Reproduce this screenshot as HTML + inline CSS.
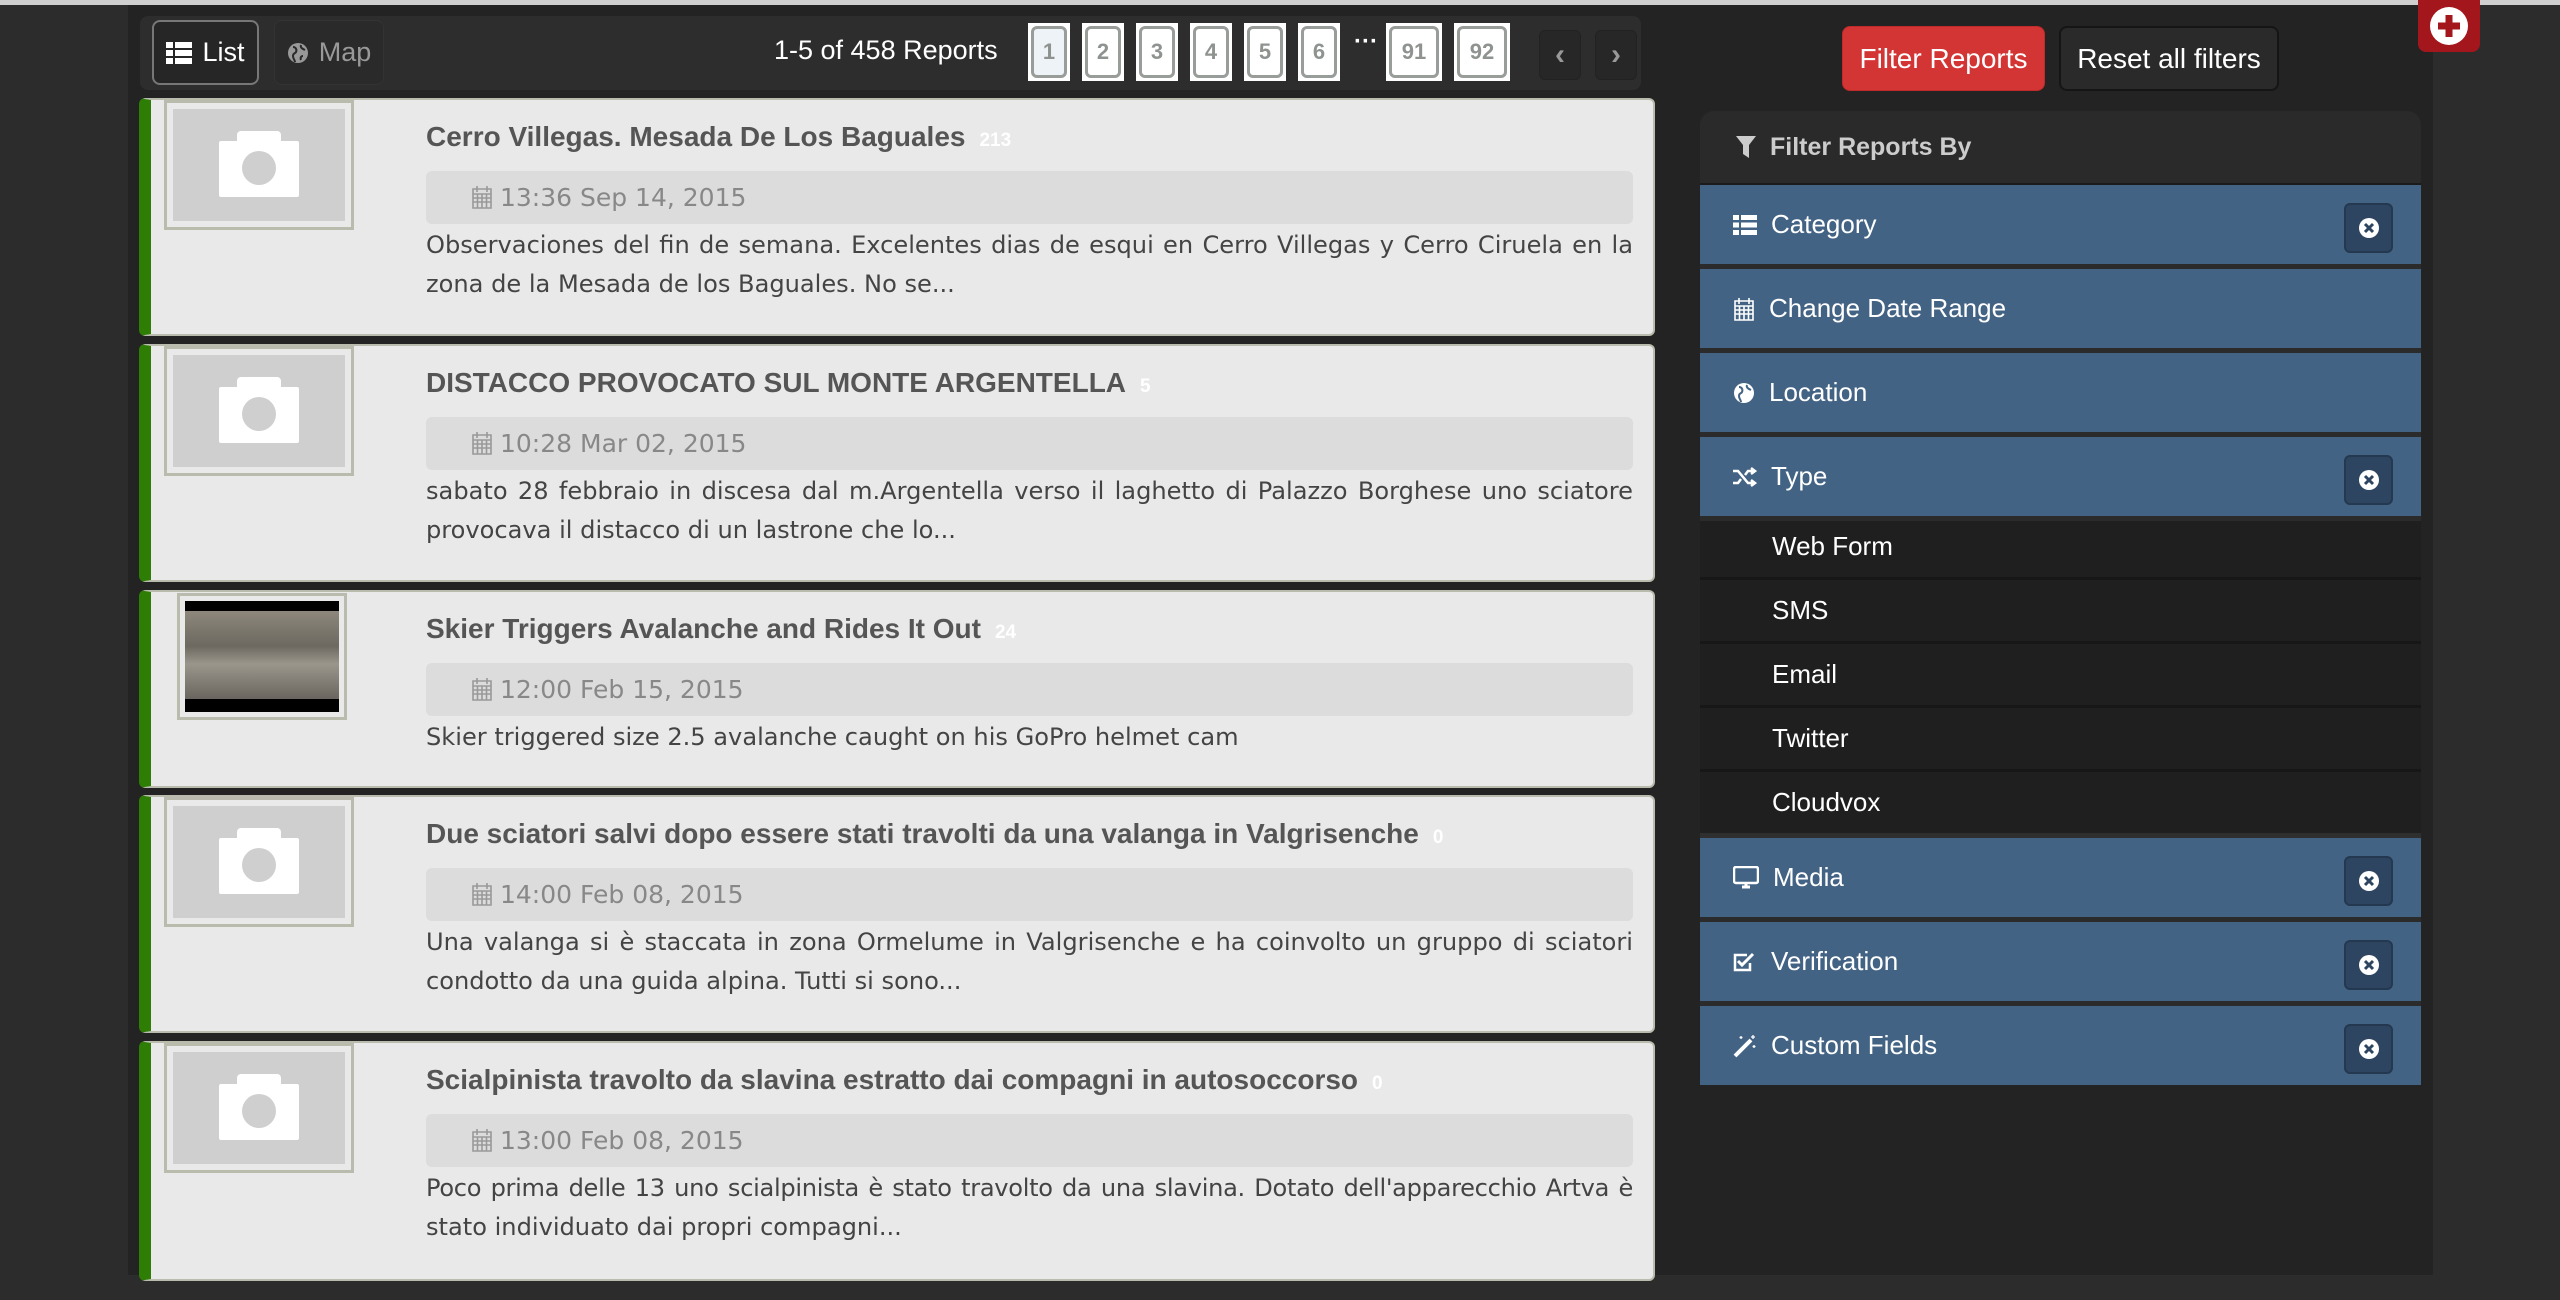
<!DOCTYPE html>
<html><head><meta charset="utf-8">
<style>
*{box-sizing:border-box;margin:0;padding:0}
body{width:2560px;height:1300px;overflow:hidden;background:#2c2c2c;font-family:"Liberation Sans",sans-serif;position:relative}
.abs{position:absolute}
#topline{left:0;top:0;width:2560px;height:5px;background:#cfcfcf}
#col{left:128px;top:5px;width:2305px;height:1270px;background:#232323}
#bar{left:140px;top:16px;width:1501px;height:74px;background:#2d2d2d;border-radius:8px}
.vbtn{top:20px;height:65px;border-radius:8px;font-size:27px;display:flex;align-items:center;justify-content:center;gap:10px}
.pg{top:23px;height:58px;background:#fff;border:1px solid #fff;}
.pg div{position:absolute;left:2px;right:2px;top:2px;bottom:2px;border:3px solid #999d99;border-radius:6px;display:flex;align-items:center;justify-content:center;color:#8f938f;font-weight:bold;font-size:22px}
.nav{top:30px;width:42px;height:50px;background:#272727;border:1px solid #222;border-radius:6px;color:#999;font-size:30px;font-weight:bold;display:flex;align-items:center;justify-content:center}
.card{left:139px;width:1516px;background:#e9e9e9;border:2px solid #b9bbad;border-left:12px solid #2e7d05;border-radius:6px}
.thumb{position:absolute;left:13px;top:0;width:190px;height:130px;border:3px solid #b9bbad;padding:6px;background:#e9e9e9}
.thumb .in{width:100%;height:100%;background:#cfcfcf;position:relative}
.cam{position:absolute;left:50%;top:50%;width:80px;height:56px;margin:-24px 0 0 -40px;background:#fff;border-radius:2px}
.cam:before{content:"";position:absolute;left:18px;top:-10px;width:44px;height:12px;background:#fff;border-radius:4px 4px 0 0}
.cam:after{content:"";position:absolute;left:23px;top:10px;width:34px;height:34px;border-radius:50%;background:#cfcfcf}
.title{position:absolute;left:275px;top:21px;font-size:28px;font-weight:bold;color:#555;white-space:nowrap}
.title span{color:#fff;font-size:19px;margin-left:14px}
.date{position:absolute;left:275px;top:71px;width:1207px;height:53px;background:#dcdcdc;border-radius:6px;color:#888;font-family:"DejaVu Sans",sans-serif;font-size:25px;padding-left:46px;line-height:53px}
.date svg{position:absolute;left:46px;top:14px}
.date b{font-weight:normal;margin-left:28px}
.desc{position:absolute;left:275px;top:126px;width:1207px;font-family:"DejaVu Sans",sans-serif;font-size:24.1px;color:#444;line-height:39px;text-align:justify;text-align-last:left}
.l1{display:block;white-space:nowrap;text-align:justify;text-align-last:justify}
.btn{top:26px;height:65px;border-radius:8px;color:#fff;font-size:28px;display:flex;align-items:center;justify-content:center}
#panel{left:1700px;top:111px;width:721px}
.ph{height:74px;background:#2a2a2a;border-radius:14px 14px 0 0;color:#ccc;font-weight:bold;font-size:25px;display:flex;align-items:center;padding-left:36px;gap:14px;border-bottom:2px solid #1b1b1b}
.bl{position:relative;height:84px;background:#436384;border-bottom:5px solid #2b2b2b;color:#fff;font-size:26px;display:flex;align-items:center;padding-left:33px;gap:14px}
.bl svg{flex:none}
.x{position:absolute;right:28px;top:18px;width:49px;height:50px;background:#2d4560;border:2px solid #243850;border-radius:6px;display:flex;align-items:center;justify-content:center}
.sub{height:64px;background:#1f1f1f;border-bottom:3px solid #171717;color:#fff;font-size:26px;display:flex;align-items:center;padding-left:72px}
</style></head><body>
<div class="abs" id="topline"></div>
<div class="abs" id="col"></div>
<div class="abs" id="bar"></div>
<div class="abs vbtn" style="left:152px;width:107px;border:2px solid #777;background:#262626;color:#fff">
<svg width="26" height="22" viewBox="0 0 26 22"><g fill="#fff"><rect x="0" y="0" width="7" height="6"/><rect x="9" y="0" width="17" height="6"/><rect x="0" y="8" width="7" height="6"/><rect x="9" y="8" width="17" height="6"/><rect x="0" y="16" width="7" height="6"/><rect x="9" y="16" width="17" height="6"/></g></svg>List</div>
<div class="abs vbtn" style="left:274px;width:110px;border:1px solid #333;background:#2a2a2a;color:#999">
<svg width="22" height="22" viewBox="0 0 22 22"><circle cx="11" cy="11" r="10" fill="#999"/><path d="M6 5c3 0 4 3 3 5s-3 1-3 4 2 4 2 6M14 3c-1 3 2 4 4 5M16 14c-2 0-3 2-2 4" stroke="#2a2a2a" stroke-width="2" fill="none"/></svg>Map</div>
<div class="abs" style="left:774px;top:35px;color:#fff;font-size:27px">1-5 of 458 Reports</div>
<div class="abs pg" style="left:1028px;width:42px"><div style="background:#eef3f7">1</div></div>
<div class="abs pg" style="left:1082px;width:42px"><div>2</div></div>
<div class="abs pg" style="left:1136px;width:42px"><div>3</div></div>
<div class="abs pg" style="left:1190px;width:42px"><div>4</div></div>
<div class="abs pg" style="left:1244px;width:42px"><div>5</div></div>
<div class="abs pg" style="left:1298px;width:42px"><div>6</div></div>
<div class="abs" style="left:1354px;top:28px;color:#fff;font-size:24px;font-weight:bold">···</div>
<div class="abs pg" style="left:1386px;width:56px"><div>91</div></div>
<div class="abs pg" style="left:1454px;width:56px"><div>92</div></div>
<div class="abs nav" style="left:1539px">‹</div>
<div class="abs nav" style="left:1595px">›</div>

<div class="abs card" style="top:98px;height:238px">
<div class="thumb"><div class="in"><div class="cam"></div></div></div>
<div class="title">Cerro Villegas. Mesada De Los Baguales<span>213</span></div>
<div class="date"><svg width="20" height="24" viewBox="0 0 20 24"><path d="M1 4h18v19H1zM1 9h18M5 1v6M15 1v6M1 13h18M1 17h18M5.5 9v14M10 9v14M14.5 9v14" stroke="#999" stroke-width="1.6" fill="none"/></svg><b>13:36 Sep 14, 2015</b></div>
<div class="desc"><span class="l1">Observaciones del fin de semana. Excelentes dias de esqui en Cerro Villegas y Cerro Ciruela en la</span>zona de la Mesada de los Baguales. No se...</div>
</div>
<div class="abs card" style="top:344px;height:238px">
<div class="thumb"><div class="in"><div class="cam"></div></div></div>
<div class="title">DISTACCO PROVOCATO SUL MONTE ARGENTELLA<span>5</span></div>
<div class="date"><svg width="20" height="24" viewBox="0 0 20 24"><path d="M1 4h18v19H1zM1 9h18M5 1v6M15 1v6M1 13h18M1 17h18M5.5 9v14M10 9v14M14.5 9v14" stroke="#999" stroke-width="1.6" fill="none"/></svg><b>10:28 Mar 02, 2015</b></div>
<div class="desc">sabato 28 febbraio in discesa dal m.Argentella verso il laghetto di Palazzo Borghese uno sciatore provocava il distacco di un lastrone che lo...</div>
</div>
<div class="abs card" style="top:590px;height:198px">
<div class="thumb" style="left:26px;top:1px;width:170px;height:127px;padding:5px"><div style="width:100%;height:100%;background:#000;padding:10px 0 13px"><div style="width:100%;height:100%;background:linear-gradient(#8d877c,#6d6960 40%,#9a968c 60%,#6a665f)"></div></div></div>
<div class="title">Skier Triggers Avalanche and Rides It Out<span>24</span></div>
<div class="date"><svg width="20" height="24" viewBox="0 0 20 24"><path d="M1 4h18v19H1zM1 9h18M5 1v6M15 1v6M1 13h18M1 17h18M5.5 9v14M10 9v14M14.5 9v14" stroke="#999" stroke-width="1.6" fill="none"/></svg><b>12:00 Feb 15, 2015</b></div>
<div class="desc">Skier triggered size 2.5 avalanche caught on his GoPro helmet cam</div>
</div>
<div class="abs card" style="top:795px;height:238px">
<div class="thumb"><div class="in"><div class="cam"></div></div></div>
<div class="title">Due sciatori salvi dopo essere stati travolti da una valanga in Valgrisenche<span>0</span></div>
<div class="date"><svg width="20" height="24" viewBox="0 0 20 24"><path d="M1 4h18v19H1zM1 9h18M5 1v6M15 1v6M1 13h18M1 17h18M5.5 9v14M10 9v14M14.5 9v14" stroke="#999" stroke-width="1.6" fill="none"/></svg><b>14:00 Feb 08, 2015</b></div>
<div class="desc"><span class="l1">Una valanga si è staccata in zona Ormelume in Valgrisenche e ha coinvolto un gruppo di sciatori</span>condotto da una guida alpina. Tutti si sono...</div>
</div>
<div class="abs card" style="top:1041px;height:240px">
<div class="thumb"><div class="in"><div class="cam"></div></div></div>
<div class="title">Scialpinista travolto da slavina estratto dai compagni in autosoccorso<span>0</span></div>
<div class="date"><svg width="20" height="24" viewBox="0 0 20 24"><path d="M1 4h18v19H1zM1 9h18M5 1v6M15 1v6M1 13h18M1 17h18M5.5 9v14M10 9v14M14.5 9v14" stroke="#999" stroke-width="1.6" fill="none"/></svg><b>13:00 Feb 08, 2015</b></div>
<div class="desc"><span class="l1" style="white-space:normal;letter-spacing:-0.3px">Poco prima delle 13 uno scialpinista è stato travolto da una slavina. Dotato dell'apparecchio Artva è</span>stato individuato dai propri compagni...</div>
</div>

<div class="abs btn" style="left:1842px;width:203px;background:#d33535;border:1px solid #c02a2a">Filter Reports</div>
<div class="abs btn" style="left:2059px;width:220px;background:#2a2a2a;border:2px solid #151515">Reset all filters</div>
<div class="abs" style="left:2418px;top:0;width:62px;height:52px;background:#a3161c;border-radius:0 0 8px 8px;display:flex;align-items:center;justify-content:center">
<svg width="40" height="40" viewBox="0 0 40 40"><circle cx="20" cy="20" r="19" fill="#fff"/><path d="M20 9v22M9 20h22" stroke="#a3161c" stroke-width="7"/></svg></div>

<div class="abs" id="panel">
<div class="ph"><svg width="20" height="22" viewBox="0 0 20 22"><path d="M0 0h20l-7 9v13l-6-4V9z" fill="#ccc"/></svg>Filter Reports By</div>
<div class="bl"><svg width="24" height="20" viewBox="0 0 24 20"><g fill="#fff"><rect x="0" y="0" width="6" height="5"/><rect x="8" y="0" width="16" height="5"/><rect x="0" y="7.5" width="6" height="5"/><rect x="8" y="7.5" width="16" height="5"/><rect x="0" y="15" width="6" height="5"/><rect x="8" y="15" width="16" height="5"/></g></svg>Category<div class="x"><svg width="22" height="22" viewBox="0 0 22 22"><circle cx="11" cy="11" r="10" fill="#fff"/><path d="M7 7l8 8M15 7l-8 8" stroke="#2d4560" stroke-width="3"/></svg></div></div>
<div class="bl"><svg width="22" height="24" viewBox="0 0 20 24"><path d="M1 4h18v19H1zM1 9h18M5 1v6M15 1v6M1 13h18M1 17h18M5.5 9v14M10 9v14M14.5 9v14" stroke="#fff" stroke-width="1.6" fill="none"/></svg>Change Date Range</div>
<div class="bl"><svg width="22" height="22" viewBox="0 0 22 22"><circle cx="11" cy="11" r="10" fill="#fff"/><path d="M6 5c3 0 4 3 3 5s-3 1-3 4 2 4 2 6M14 3c-1 3 2 4 4 5" stroke="#436384" stroke-width="2" fill="none"/></svg>Location</div>
<div class="bl"><svg width="24" height="22" viewBox="0 0 24 22"><path d="M0 5h5l10 12h5M0 17h5l3-4M12 9l3-4h5M18 2l4 3-4 3M18 14l4 3-4 3" stroke="#fff" stroke-width="2.5" fill="none"/></svg>Type<div class="x"><svg width="22" height="22" viewBox="0 0 22 22"><circle cx="11" cy="11" r="10" fill="#fff"/><path d="M7 7l8 8M15 7l-8 8" stroke="#2d4560" stroke-width="3"/></svg></div></div>
<div style="margin-top:-5px">
<div class="sub">Web Form</div>
<div class="sub">SMS</div>
<div class="sub">Email</div>
<div class="sub">Twitter</div>
<div class="sub" style="border-bottom:5px solid #2f2f2f;height:66px">Cloudvox</div>
</div>
<div class="bl"><svg width="26" height="24" viewBox="0 0 26 24"><rect x="1" y="1" width="24" height="16" rx="2" stroke="#fff" stroke-width="2.5" fill="none"/><path d="M9 21h8M13 17v4" stroke="#fff" stroke-width="3"/></svg>Media<div class="x"><svg width="22" height="22" viewBox="0 0 22 22"><circle cx="11" cy="11" r="10" fill="#fff"/><path d="M7 7l8 8M15 7l-8 8" stroke="#2d4560" stroke-width="3"/></svg></div></div>
<div class="bl"><svg width="24" height="22" viewBox="0 0 24 22"><path d="M17 12v7H2V4h12" stroke="#fff" stroke-width="2.5" fill="none"/><path d="M5 10l4 4 11-11" stroke="#fff" stroke-width="3" fill="none"/></svg>Verification<div class="x"><svg width="22" height="22" viewBox="0 0 22 22"><circle cx="11" cy="11" r="10" fill="#fff"/><path d="M7 7l8 8M15 7l-8 8" stroke="#2d4560" stroke-width="3"/></svg></div></div>
<div class="bl" style="border-bottom:none;height:79px"><svg width="24" height="24" viewBox="0 0 24 24"><path d="M2 22L18 6" stroke="#fff" stroke-width="4"/><path d="M20 1v4M18 3h4M8 2v3M6.5 3.5h3M21 11v3M19.5 12.5h3" stroke="#fff" stroke-width="1.3"/></svg>Custom Fields<div class="x"><svg width="22" height="22" viewBox="0 0 22 22"><circle cx="11" cy="11" r="10" fill="#fff"/><path d="M7 7l8 8M15 7l-8 8" stroke="#2d4560" stroke-width="3"/></svg></div></div>
</div>
</body></html>
